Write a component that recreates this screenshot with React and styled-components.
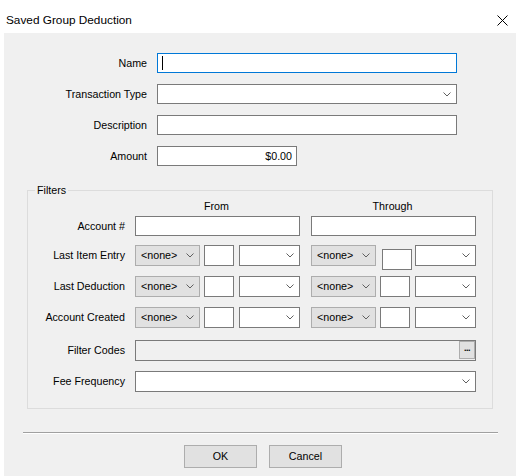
import React from 'react';
import styled, { createGlobalStyle } from 'styled-components';

const GlobalStyle = createGlobalStyle`
  html, body { margin: 0; padding: 0; background: #ffffff; }
  body {
    font-family: "Liberation Sans", Arial, sans-serif;
    font-size: 10.7px;
    color: #000000;
  }
  * { box-sizing: border-box; }
`;

const Window = styled.div`
  width: 516px;
  height: 476px;
  display: flex;
  flex-direction: column;
  background: #ffffff;
  overflow: hidden;
`;

const TitleBar = styled.div`
  height: 33px;
  flex: none;
  display: flex;
  align-items: center;
  justify-content: space-between;
  padding: 7px 8px 0 6px;
`;

const Title = styled.span`
  font-size: 11.8px;
  line-height: 14px;
`;

const CloseGlyph = styled.svg`
  display: block;
`;

const Client = styled.div`
  flex: 1;
  margin-left: 4px;
  background: #f0f0f0;
  display: flex;
  flex-direction: column;
`;

const MainForm = styled.div`
  display: grid;
  grid-template-columns: 143px 300px;
  column-gap: 10px;
  row-gap: 11px;
  align-items: center;
  padding-top: 20px;
`;

const Label = styled.label`
  text-align: right;
  white-space: nowrap;
  line-height: 13px;
  padding-right: ${p => p.$pad || 0}px;
`;

const Box = styled.div`
  height: ${p => p.$h || 20}px;
  width: ${p => (p.$w ? `${p.$w}px` : '100%')};
  background: ${p => p.$bg || '#ffffff'};
  border: 1px solid ${p => p.$border || '#7a7a7a'};
  display: flex;
  align-items: center;
  justify-content: ${p => p.$justify || 'flex-start'};
  padding: 0 ${p => p.$pr ?? 4}px 0 ${p => p.$pl ?? 4}px;
  margin-top: ${p => p.$mt || 0}px;
  margin-left: ${p => p.$ml || 0}px;
  margin-right: ${p => p.$mr || 0}px;
  align-self: ${p => (p.$mt ? 'flex-start' : 'auto')};
  flex: none;
  line-height: 13px;
  white-space: nowrap;
`;

const Caret = styled.span`
  width: 1px;
  height: 14px;
  background: #000000;
`;

const Grow = styled.span`
  flex: 1;
`;

const Group = styled.fieldset`
  margin: 18px 23px 0;
  padding: 2px 15px 16px 0;
  border: 1px solid #dcdcdc;
  min-width: 0;
  display: flex;
  flex-direction: column;
`;

const Legend = styled.legend`
  margin-left: 7px;
  padding: 0 2px;
  line-height: 13px;
`;

const FilterRow = styled.div`
  display: grid;
  grid-template-columns: 107px 176px 165px;
  align-items: center;
  margin-top: ${p => p.$gap || 0}px;
  height: ${p => p.$h}px;
`;

const ColumnHead = styled.div`
  text-align: center;
  width: 165px;
  line-height: 14px;
  margin-left: ${p => p.$shift || 0}px;
`;

const Range = styled.div`
  display: flex;
  align-items: center;
  width: 165px;
  height: 21px;
`;

const Span = styled.div`
  grid-column: 2 / 4;
`;

const DotsButton = styled.div`
  width: 16px;
  height: 18px;
  margin-right: -4px;
  align-self: flex-start;
  background: #e1e1e1;
  border: 1px solid #adadad;
  font-size: 9px;
  font-weight: bold;
  line-height: 12px;
  text-align: center;
  letter-spacing: -0.5px;
`;

const Separator = styled.div`
  margin: 23px 18px 0 19px;
  border-top: 1px solid #a0a0a0;
  border-bottom: 1px solid #ffffff;
`;

const ButtonRow = styled.div`
  display: flex;
  justify-content: center;
  gap: 12px;
  margin-top: 11px;
  padding-left: 6px;
`;

const Button = styled.div`
  width: 73px;
  height: 23px;
  background: #e1e1e1;
  border: 1px solid #adadad;
  display: flex;
  align-items: center;
  justify-content: center;
  line-height: 13px;
`;

const Chevron = () => (
  <svg width="8" height="5" viewBox="0 0 8 5">
    <polyline points="0.5,0.5 4,4 7.5,0.5" fill="none" stroke="#606060" strokeWidth="1" />
  </svg>
);

const Combo = ({ w, h = 21, children, disabled, ...rest }) => (
  <Box
    $w={w}
    $h={h}
    $bg={disabled ? '#e1e1e1' : '#ffffff'}
    $border={disabled ? '#adadad' : '#7a7a7a'}
    $pr={5}
    $pl={5}
    {...rest}
  >
    <Grow>{children}</Grow>
    <Chevron />
  </Box>
);

const DateRange = ({ small }) => (
  <Range>
    <Combo w={65} disabled>&lt;none&gt;</Combo>
    <Box $w={small.w} $h={21} $ml={small.ml} $mr={small.mr} $mt={small.mt} />
    <Combo w={61} />
  </Range>
);

const fromBox = { w: 30, ml: 4, mr: 5 };
const throughRows = [
  { w: 30, ml: 6, mr: 3, mt: 4 },
  { w: 30, ml: 4, mr: 5 },
  { w: 30, ml: 4, mr: 5 },
];

const dateFilters = ['Last Item Entry', 'Last Deduction', 'Account Created'];

export default function App() {
  return (
    <>
      <GlobalStyle />
      <Window>
        <TitleBar>
          <Title>Saved Group Deduction</Title>
          <CloseGlyph width="11" height="11" viewBox="0 0 11 11">
            <path d="M0.5 0.5 L10.5 10.5 M10.5 0.5 L0.5 10.5" stroke="#000" strokeWidth="1" />
          </CloseGlyph>
        </TitleBar>
        <Client>
          <MainForm>
            <Label>Name</Label>
            <Box $border="#0078d7"><Caret /></Box>
            <Label>Transaction Type</Label>
            <Combo h={20} />
            <Label>Description</Label>
            <Box />
            <Label>Amount</Label>
            <Box $w={140} $justify="flex-end" $pr={4}>$0.00</Box>
          </MainForm>

          <Group>
            <Legend>Filters</Legend>
            <FilterRow $h={14}>
              <span />
              <ColumnHead $shift={-1}>From</ColumnHead>
              <ColumnHead $shift={-1}>Through</ColumnHead>
            </FilterRow>
            <FilterRow $h={20} $gap={3}>
              <Label $pad={10}>Account #</Label>
              <Box $w={165} />
              <Box $w={165} />
            </FilterRow>
            {dateFilters.map((name, i) => (
              <FilterRow key={name} $h={21} $gap={i === 0 ? 9 : 10}>
                <Label $pad={10}>{name}</Label>
                <DateRange small={fromBox} />
                <DateRange small={throughRows[i]} />
              </FilterRow>
            ))}
            <FilterRow $h={21} $gap={12}>
              <Label $pad={10}>Filter Codes</Label>
              <Span>
                <Box $h={21} $bg="#f0f0f0">
                  <Grow />
                  <DotsButton>...</DotsButton>
                </Box>
              </Span>
            </FilterRow>
            <FilterRow $h={21} $gap={10}>
              <Label $pad={10}>Fee Frequency</Label>
              <Span>
                <Combo />
              </Span>
            </FilterRow>
          </Group>

          <Separator />
          <ButtonRow>
            <Button>OK</Button>
            <Button>Cancel</Button>
          </ButtonRow>
        </Client>
      </Window>
    </>
  );
}
